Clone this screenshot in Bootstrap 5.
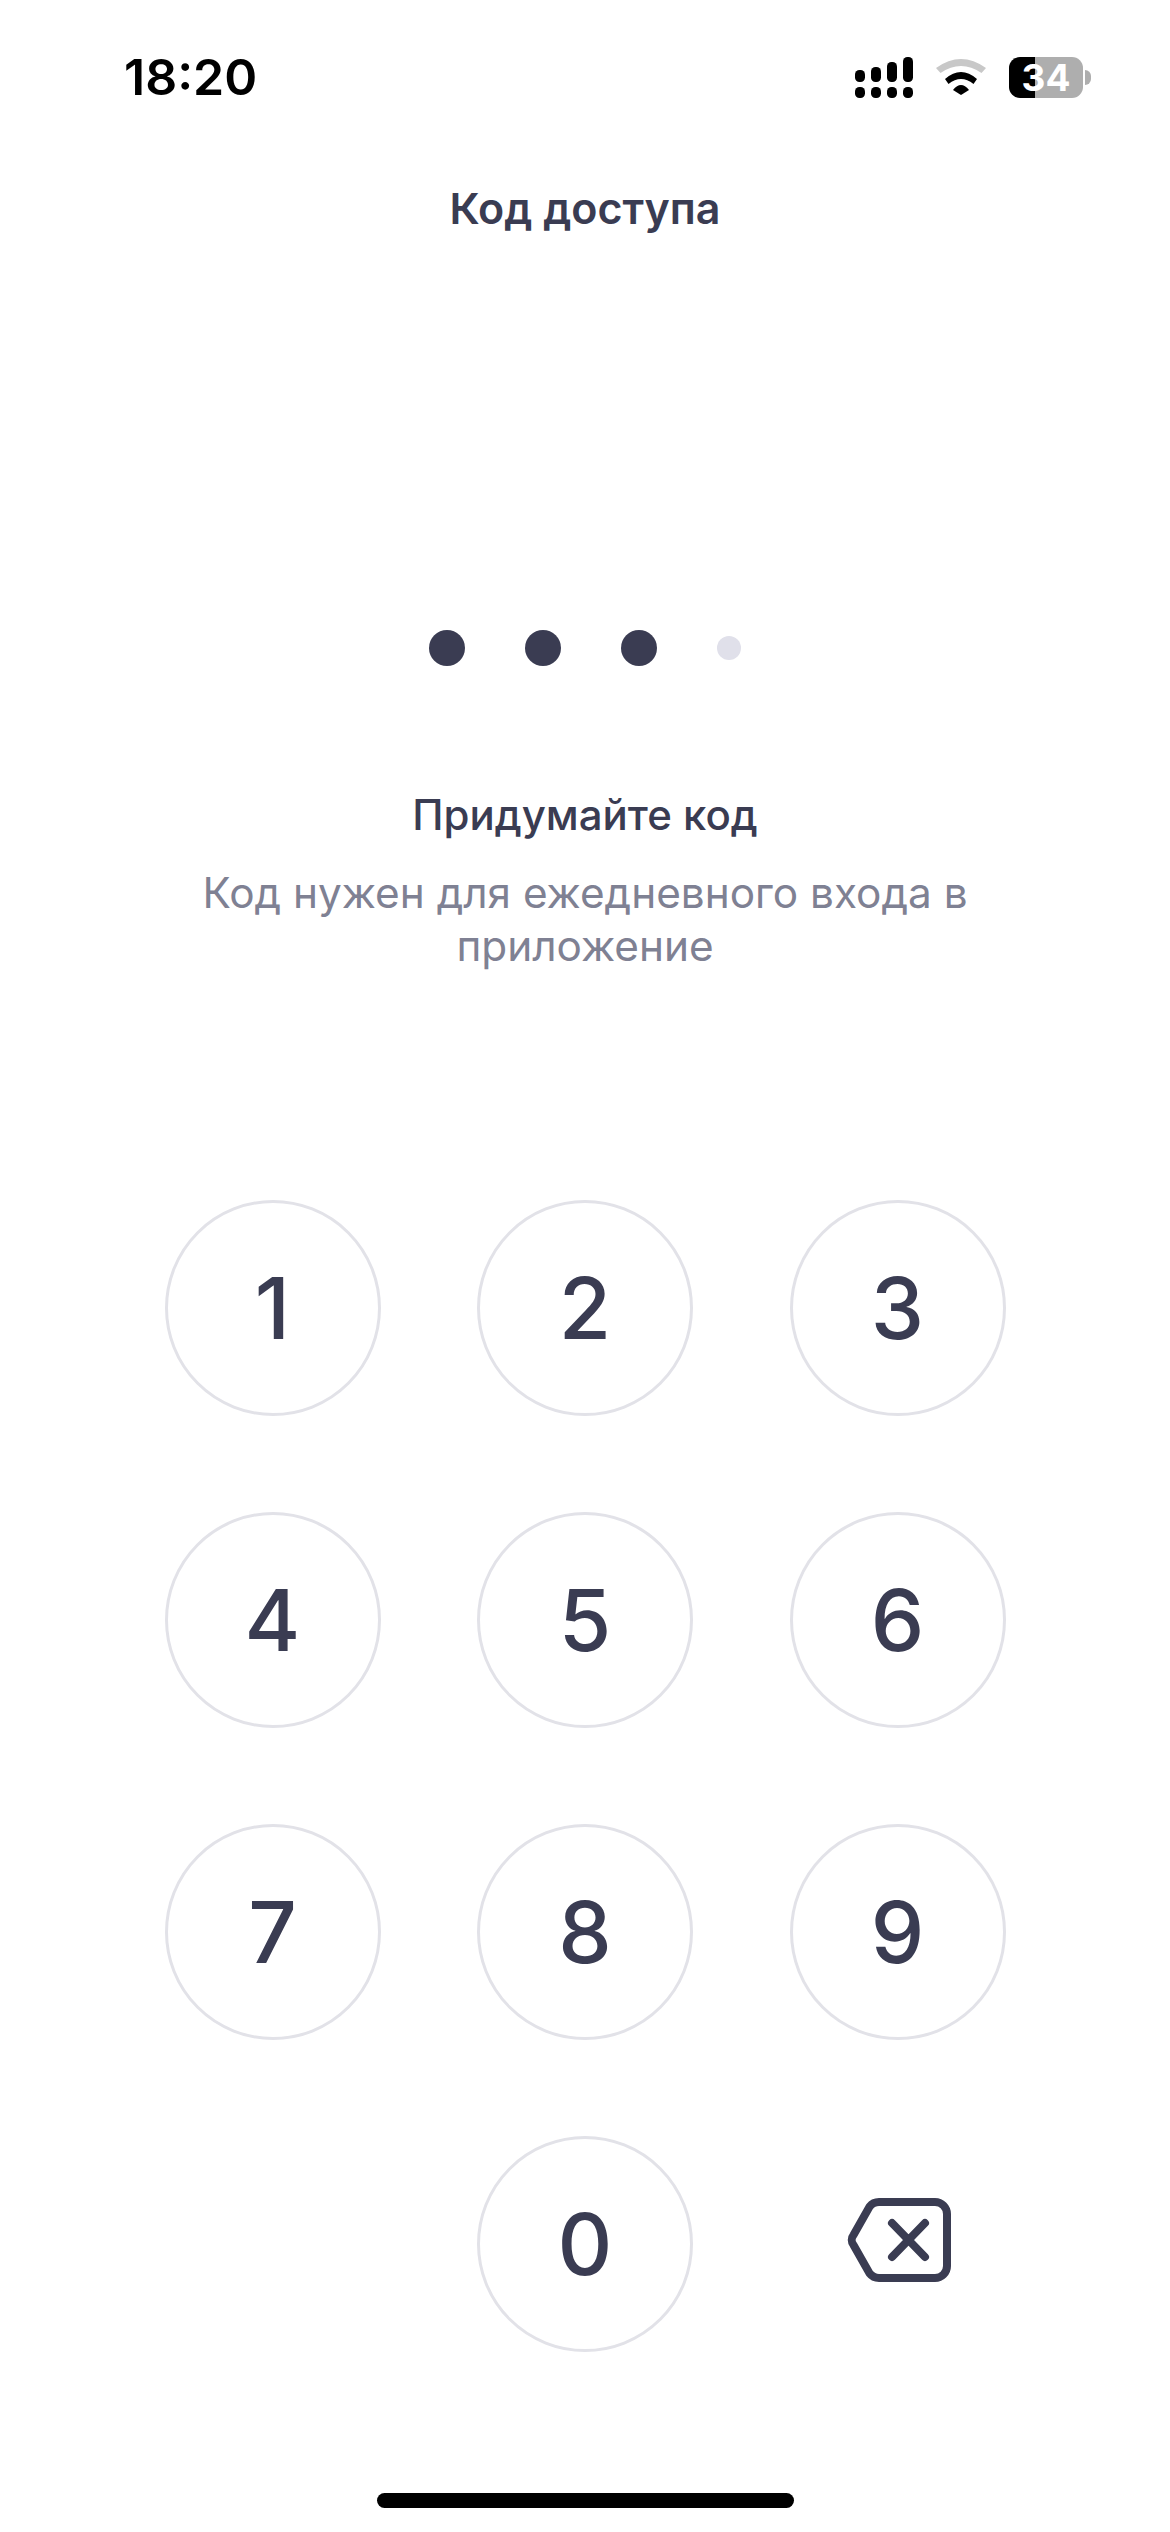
<!DOCTYPE html>
<html lang="ru">
<head>
  <meta charset="UTF-8">
  <meta name="viewport" content="width=device-width, initial-scale=1.0">
  <title>Код доступа</title>
  <link href="https://cdn.jsdelivr.net/npm/bootstrap@5.3.0/dist/css/bootstrap.min.css" rel="stylesheet">
  <style>
    body { background: #fff; color: #3a3c52; font-family: Inter, "Noto Sans", sans-serif; }
    .app-screen { width: 1170px; height: 2532px; overflow: hidden; }
    .status-row { height: 54px; margin-top: 50px; padding-left: 124px; padding-right: 87px; }
    .status-time { font-size: 50px; font-weight: 600; line-height: 54px; color: #000; }
    .status-icons { gap: 23px; }
    .batt-body { width: 74px; height: 41px; border-radius: 11px; background: linear-gradient(to right, #000 26px, #aeaeae 26px); color: #fff; font-size: 37px; font-weight: 700; line-height: 41px; position: relative; }
    .batt-body::after { content: ""; position: absolute; left: 76px; top: 13px; width: 6px; height: 15px; border-radius: 0 8px 8px 0; background: #aeaeae; }
    .page-title { margin-top: 79px; font-size: 43px; font-weight: 600; line-height: 50px; }
    .code-dots { margin-top: 397px; height: 36px; gap: 60px; }
    .code-dot { width: 36px; height: 36px; background: #3a3c52; }
    .code-dot.is-empty { width: 24px; height: 24px; background: #e0e0ea; }
    .hint-title { margin-top: 122px; font-size: 42px; font-weight: 500; line-height: 53px; }
    .hint-text { margin-top: 25px; font-size: 42.3px; line-height: 53px; color: #7f8193; width: 800px; }
    .keypad { margin-top: 228px; display: grid; grid-template-columns: repeat(3, 216px); grid-auto-rows: 216px; column-gap: 96.5px; row-gap: 96px; }
    .key-digit { width: 216px; height: 216px; padding: 0; border: 3px solid #e2e2e8; background: #fff; color: #3a3c52; font-size: 85px; font-weight: 500; line-height: 1; }
    .key-back { padding: 0 0 8px 3px; border: 0; background: none; }
    .home-bar { width: 417px; height: 15px; margin-top: 141px; background: #000; border-radius: 8px; }
  </style>
</head>
<body>
  <div class="app-screen d-flex flex-column align-items-center">
    <!-- status bar -->
    <div class="status-row w-100 d-flex justify-content-between align-items-center">
      <span class="status-time">18:20</span>
      <div class="status-icons d-flex align-items-center">
        <svg width="58" height="41" viewBox="0 0 58 41" fill="#000">
          <rect x="0" y="13" width="10" height="12" rx="4.5"/><rect x="16" y="10" width="10" height="15" rx="4.5"/>
          <rect x="32" y="5" width="10" height="20" rx="4.5"/><rect x="48" y="0" width="10" height="25" rx="4.5"/>
          <rect x="0" y="30" width="10" height="11" rx="4.5"/><rect x="16" y="30" width="10" height="11" rx="4.5"/>
          <rect x="32" y="30" width="10" height="11" rx="4.5"/><rect x="48" y="30" width="10" height="11" rx="4.5"/>
        </svg>
        <svg width="50" height="36" viewBox="0 0 50 36">
          <path d="M0 9Q25-9 50 9L45.5 14Q25 0 4.5 14Z" fill="#c8c8c8"/>
          <path d="M9 20Q25 6 41 20L37.5 25Q25 15 12.5 25Z" fill="#000"/>
          <path d="M17 31Q25 21 33 31L25 36Z" fill="#000"/>
        </svg>
        <div class="batt-body text-center">34</div>
      </div>
    </div>

    <div class="page-title">Код доступа</div>

    <!-- entered code -->
    <div class="code-dots d-flex align-items-center">
      <span class="code-dot rounded-circle"></span>
      <span class="code-dot rounded-circle"></span>
      <span class="code-dot rounded-circle"></span>
      <span class="code-dot is-empty rounded-circle"></span>
    </div>

    <div class="hint-title text-center">Придумайте код</div>
    <div class="hint-text text-center">Код нужен для ежедневного входа в приложение</div>

    <div class="keypad" id="keypad"></div>

    <div class="home-bar"></div>
  </div>

  <script src="https://cdn.jsdelivr.net/npm/bootstrap@5.3.0/dist/js/bootstrap.bundle.min.js"></script>
  <script>
    const keypad = document.getElementById('keypad');
    ['1', '2', '3', '4', '5', '6', '7', '8', '9', '', '0', 'back'].forEach(k => {
      if (k === '') {
        keypad.appendChild(document.createElement('div'));
      } else if (k === 'back') {
        const b = document.createElement('button');
        b.type = 'button';
        b.className = 'key-back d-flex align-items-center justify-content-center';
        b.setAttribute('aria-label', 'Удалить');
        b.innerHTML = '<svg width="104" height="84" viewBox="0 0 104 84" fill="none" stroke="#3a3c52" stroke-width="8" stroke-linecap="round" stroke-linejoin="round"><path d="M32 4H88a12 12 0 0 1 12 12V68a12 12 0 0 1-12 12H32a12 12 0 0 1-9.5-4.7L6.5 47a8 8 0 0 1 0-10L22.5 8.7A12 12 0 0 1 32 4Z"/><path d="M45 25L78 59M78 25L45 59"/></svg>';
        keypad.appendChild(b);
      } else {
        const b = document.createElement('button');
        b.type = 'button';
        b.className = 'key-digit rounded-circle d-flex align-items-center justify-content-center';
        b.textContent = k;
        keypad.appendChild(b);
      }
    });
  </script>
</body>
</html>
